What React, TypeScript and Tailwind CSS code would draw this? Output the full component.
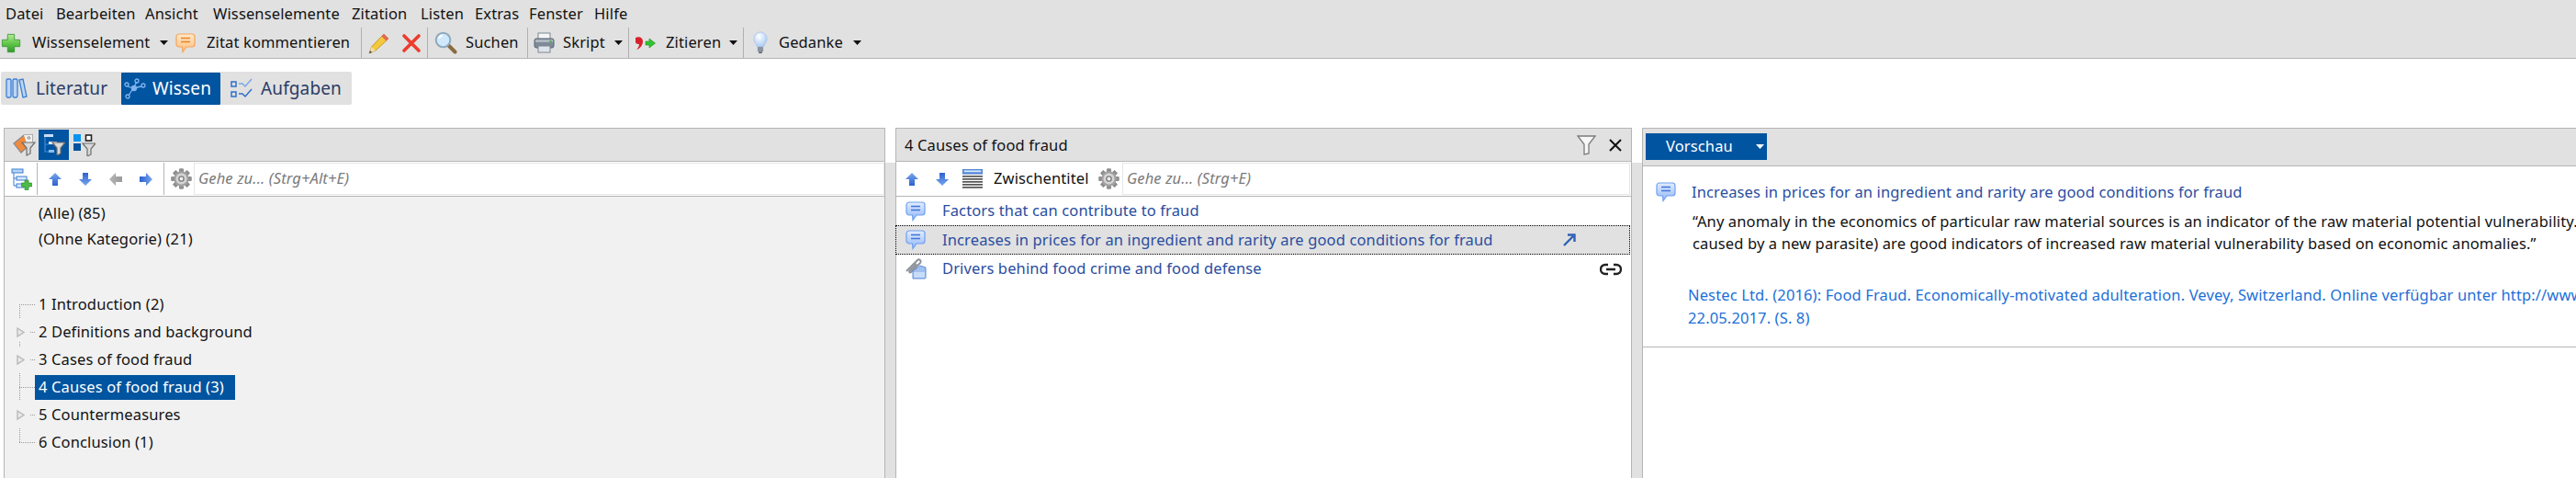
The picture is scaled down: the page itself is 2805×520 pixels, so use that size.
import React from "react";

const BLUE = "#01549f";

function Plus() {
  return (
    <svg width="22" height="22" viewBox="0 0 24 24" className="shrink-0">
      <defs>
        <linearGradient id="pg" x1="0" y1="0" x2="0" y2="1">
          <stop offset="0" stopColor="#b6ec9a" />
          <stop offset="0.5" stopColor="#62c94b" />
          <stop offset="1" stopColor="#2f9a2a" />
        </linearGradient>
      </defs>
      <path d="M8 1.500h8v6.500h6.500v8H16v6.500H8V16H1.500V8H8z" fill="url(#pg)" stroke="#3d9a38" strokeWidth="1" />
    </svg>
  );
}

function Bubble({ tone = "blue", size = 22 }: { tone?: "blue" | "orange"; size?: number }) {
  const c =
    tone === "blue"
      ? { a: "#e3edff", b: "#8fb6f6", s: "#6f9ff0", l: "#3f74d8" }
      : { a: "#ffe9c9", b: "#ffbd7a", s: "#f6a55b", l: "#e8842a" };
  const id = "bb" + tone;
  return (
    <svg width={size} height={size} viewBox="0 0 22 22" className="shrink-0">
      <defs>
        <linearGradient id={id} x1="0" y1="0" x2="0" y2="1">
          <stop offset="0" stopColor={c.a} />
          <stop offset="1" stopColor={c.b} />
        </linearGradient>
      </defs>
      <path
        d="M4 1h14a3 3 0 0 1 3 3v8a3 3 0 0 1-3 3h-6l-4 5.500-.5-5.500H4a3 3 0 0 1-3-3V4a3 3 0 0 1 3-3z"
        fill={`url(#${id})`}
        stroke={c.s}
        strokeWidth="1.200"
      />
      <path d="M6 5.500h10M6 9.500h10" stroke={c.l} strokeWidth="1.600" />
    </svg>
  );
}

function Pencil() {
  return (
    <svg width="24" height="24" viewBox="0 0 24 24" className="shrink-0">
      <path d="M17 2l5 5L8 20l-7 3 2.500-7z" fill="#f4c93b" stroke="#b98a1b" strokeWidth="0.800" />
      <path d="M17 2l5 5-2.500 2.500-5-5z" fill="#e2685a" />
      <path d="M1 23l2.500-7 4.500 4z" fill="#f2dcae" />
      <path d="M1 23l1-3 2 2z" fill="#444" />
    </svg>
  );
}

function RedX() {
  return (
    <svg width="22" height="22" viewBox="0 0 22 22" className="shrink-0">
      <path d="M3 3l16 16M19 3L3 19" stroke="#ec3b2f" strokeWidth="3.600" strokeLinecap="round" />
    </svg>
  );
}

function Magnifier() {
  return (
    <svg width="25" height="25" viewBox="0 0 25 25" className="shrink-0">
      <path d="M15 15l7.500 7.500" stroke="#8a6a3f" strokeWidth="4" strokeLinecap="round" />
      <circle cx="9.500" cy="9.500" r="7.800" fill="#cfe8fb" stroke="#8fa9bd" strokeWidth="2" />
      <path d="M5 8a5 5 0 0 1 4-3.500" stroke="#fff" strokeWidth="1.800" fill="none" />
    </svg>
  );
}

function Printer() {
  return (
    <svg width="23" height="23" viewBox="0 0 23 23" className="shrink-0">
      <rect x="5" y="1" width="13" height="8" fill="#f3f5f8" stroke="#7d8793" />
      <rect x="1" y="7" width="21" height="10" rx="2" fill="#7f8a97" stroke="#5b6672" />
      <rect x="2" y="8" width="19" height="3" fill="#aeb7c2" />
      <rect x="17" y="9" width="3" height="2" fill="#4ec04e" />
      <rect x="5" y="15" width="13" height="7" fill="#dfe4ea" stroke="#7d8793" />
    </svg>
  );
}

function QuoteArrow() {
  return (
    <svg width="22" height="14" viewBox="0 0 22 14" className="shrink-0">
      <path d="M0 1c4-2 8 0 8 4 0 4-3 8-7 9 2-2 3-4 3-6-2 0-4 0-4-3z" fill="#d8202c" />
      <path d="M11 5h4V2l6.500 5L15 12V9h-4z" fill="#31c331" stroke="#1e8f1e" strokeWidth="0.600" />
    </svg>
  );
}

function Bulb() {
  return (
    <svg width="16" height="25" viewBox="0 0 18 28" className="shrink-0">
      <defs>
        <radialGradient id="bulb" cx="0.4" cy="0.3" r="0.8">
          <stop offset="0" stopColor="#ffffff" />
          <stop offset="1" stopColor="#9fc4f3" />
        </radialGradient>
      </defs>
      <path d="M9 1a8 8 0 0 1 8 8c0 4-3 6-4 10H5C4 15 1 13 1 9a8 8 0 0 1 8-8z" fill="url(#bulb)" stroke="#a9c4e6" />
      <rect x="5.500" y="19" width="7" height="6" rx="1" fill="#8a939e" />
      <rect x="7" y="25" width="4" height="2" fill="#5d6670" />
    </svg>
  );
}

function Caret({ white = false }: { white?: boolean }) {
  return (
    <svg width="9" height="5" viewBox="0 0 9 5" className="shrink-0 block">
      <path d="M0 0h9L4.500 5z" fill={white ? "#fff" : "#111"} />
    </svg>
  );
}

function Sep() {
  return <div className="w-px h-[33px] bg-[#b0b0b0] shrink-0" />;
}

function Arrow({ dir, gray = false }: { dir: "up" | "down" | "left" | "right"; gray?: boolean }) {
  const rot = { up: 0, right: 90, down: 180, left: 270 }[dir];
  const id = gray ? "arG" : "arB";
  return (
    <svg width="14" height="14" viewBox="0 0 14 14" className="shrink-0" style={{ transform: `rotate(${rot}deg)` }}>
      <defs>
        <linearGradient id={id} x1="0" y1="0" x2="0" y2="1">
          <stop offset="0" stopColor={gray ? "#b5b5b5" : "#7aa6ef"} />
          <stop offset="1" stopColor={gray ? "#9a9a9a" : "#2c62cf"} />
        </linearGradient>
      </defs>
      <path d="M7 0l7 7H10v7H4V7H0z" fill={`url(#${id})`} />
    </svg>
  );
}

function Gear({ size = 23 }: { size?: number }) {
  const teeth = [0, 45, 90, 135, 180, 225, 270, 315];
  return (
    <svg width={size} height={size} viewBox="0 0 24 24" className="shrink-0">
      {teeth.map((t) => (
        <rect key={t} x="9.500" y="0.500" width="5" height="23" rx="1" fill="#8f8f8f" transform={`rotate(${t} 12 12)`} />
      ))}
      <circle cx="12" cy="12" r="8.500" fill="#a3a3a3" />
      <circle cx="12" cy="12" r="6.200" fill="#d6d6d6" />
      <circle cx="12" cy="12" r="3.500" fill="#7d7d7d" />
      <circle cx="12" cy="12" r="2" fill="#eeeeee" />
    </svg>
  );
}

function SmallFunnel({ x = 10, y = 10 }: { x?: number; y?: number }) {
  return (
    <g transform={`translate(${x} ${y})`}>
      <path d="M0 0h14L9 6v6l-4 2V6z" fill="#d9d9d9" stroke="#6e6e6e" strokeWidth="1.200" />
    </g>
  );
}

function TagFilter() {
  return (
    <svg width="25" height="25" viewBox="0 0 25 25" className="shrink-0">
      <path d="M1 11L12 2l9-.5L21 10 9 21z" fill="#f08a3c" stroke="#8a8a8a" strokeWidth="1.200" />
      <path d="M12 2l9-.5L21 10l-5 4z" fill="#f1f1f1" />
      <circle cx="17.500" cy="5" r="1.300" fill="#fff" stroke="#777" />
      <SmallFunnel x={10} y={10} />
    </svg>
  );
}

function TreeFilter() {
  return (
    <svg width="24" height="24" viewBox="0 0 24 24" className="shrink-0">
      <rect x="1" y="1" width="10" height="3" fill="#c8dcf7" />
      <path d="M2 4v16h4M2 12h4" stroke="#3f8be0" strokeWidth="1.200" fill="none" />
      <rect x="6" y="9" width="9" height="3" fill="#e4eefb" />
      <rect x="6" y="18" width="6" height="3" fill="#8cbcf2" />
      <SmallFunnel x={10} y={10} />
    </svg>
  );
}

function GridFilter() {
  return (
    <svg width="24" height="24" viewBox="0 0 24 24" className="shrink-0">
      <rect x="0" y="0" width="8" height="8" fill="#0a94f2" />
      <rect x="13.500" y="1" width="6" height="6" fill="#fff" stroke="#222" strokeWidth="1.600" />
      <rect x="0" y="10" width="8" height="8" fill="#01549f" />
      <SmallFunnel x={10} y={10} />
    </svg>
  );
}

function TreeAdd() {
  return (
    <svg width="24" height="24" viewBox="0 0 24 24" className="shrink-0">
      <rect x="1" y="1" width="12" height="4" fill="#b9d4f6" stroke="#3b7fd0" />
      <path d="M3 5v14h3M3 11h3" stroke="#3b7fd0" fill="none" />
      <rect x="6" y="9" width="11" height="4" fill="#d9e8fb" stroke="#3b7fd0" />
      <rect x="6" y="17" width="8" height="4" fill="#d9e8fb" stroke="#3b7fd0" />
      <path d="M15 13h4v3h3.500v4H19v3.500h-4V20h-3.500v-4H15z" fill="#4dbb47" stroke="#2a8e2a" strokeWidth="0.700" />
    </svg>
  );
}

function ListIcon() {
  return (
    <svg width="22" height="22" viewBox="0 0 22 22" className="shrink-0">
      <rect x="0" y="0" width="22" height="5" fill="#6d9fe4" stroke="#3e6fc0" />
      <rect x="2" y="1.500" width="18" height="1.500" fill="#dbe8fb" />
      {[7, 10, 13, 16, 19].map((y) => (
        <rect key={y} x="0" y={y} width="22" height="1.700" fill="#555" />
      ))}
    </svg>
  );
}

function Clip() {
  return (
    <svg width="23" height="23" viewBox="0 0 23 23" className="shrink-0">
      <path d="M1 14L13 2c2-2 5 1 3 3L6 15c-1 1-2.500 0-1.500-1.500L12 6" fill="none" stroke="#8a8f98" strokeWidth="1.800" />
      <path d="M8 14l8-6 6 2v11a1 1 0 0 1-1 1H8z" fill="#9fc0f0" stroke="#5f8fd8" />
      <path d="M9 15h12v6H9z" fill="#c7dcf8" />
    </svg>
  );
}

function TabLit() {
  return (
    <svg width="24" height="24" viewBox="0 0 24 24" className="shrink-0">
      <g fill="#bcd6f5" stroke="#3f7fd0" strokeWidth="1.300">
        <rect x="1" y="2" width="5" height="20" rx="1.500" />
        <rect x="8" y="2" width="5" height="20" rx="1.500" />
        <path d="M15 3l4-1 4 19-4 1z" />
      </g>
    </svg>
  );
}

function TabWissen() {
  return (
    <svg width="24" height="24" viewBox="0 0 24 24" className="shrink-0" fill="none" stroke="#7fb4ef" strokeWidth="1.300">
      <path d="M4 10l6 2 4-7M10 12l-5 8M10 12l9-2" />
      <circle cx="3" cy="8" r="2" />
      <circle cx="14" cy="4" r="2" />
      <circle cx="21" cy="9" r="2" />
      <circle cx="4" cy="21" r="2" />
      <circle cx="11" cy="12" r="2.500" fill="#7fb4ef" />
    </svg>
  );
}

function TabAufgaben() {
  return (
    <svg width="24" height="24" viewBox="0 0 24 24" className="shrink-0" fill="none">
      <rect x="1" y="5" width="5" height="5" stroke="#2f6fc9" strokeWidth="1.500" />
      <rect x="1" y="16" width="5" height="5" stroke="#2f6fc9" strokeWidth="1.500" />
      <path d="M9 7h4l3 3 7-8" stroke="#78a9e6" strokeWidth="1.500" />
      <path d="M9 18h4l3 3 7-8" stroke="#2f6fc9" strokeWidth="1.500" />
    </svg>
  );
}

function BigFunnel() {
  return (
    <svg width="21" height="22" viewBox="0 0 21 22" className="shrink-0">
      <path d="M1 1h19l-7 9v10l-5 1V10z" fill="#f7f7f7" stroke="#7b7b7b" strokeWidth="1.300" />
    </svg>
  );
}

function TreeGlyph({ v, tri = false }: { v: [number, number][]; tri?: boolean }) {
  return (
    <svg width="38" height="30" viewBox="0 0 38 30" className="shrink-0">
      {v.map(([a, b], i) => (
        <path key={i} d={`M21.500 ${a}V${b}`} stroke="#9a9a9a" strokeDasharray="1 1" fill="none" />
      ))}
      {tri ? (
        <g>
          <path d="M19 11l7 4.500-7 4.500z" fill="#e9e9e9" stroke="#b5b5b5" strokeWidth="1.300" />
          <path d="M33 15.500h5" stroke="#9a9a9a" strokeDasharray="1 1" />
        </g>
      ) : (
        <path d="M21 15.500h17" stroke="#9a9a9a" strokeDasharray="1 1" />
      )}
    </svg>
  );
}

function TreeRow({ label, v, tri, selected }: { label: string; v: [number, number][]; tri?: boolean; selected?: boolean }) {
  return (
    <div className="flex items-center h-[30px]">
      <TreeGlyph v={v} tri={tri} />
      {selected ? (
        <div className="h-[27px] w-[218px] pl-[4px] flex items-center text-white bg-[#01549f] whitespace-nowrap">{label}</div>
      ) : (
        <div className="pl-[4px] whitespace-nowrap text-[#111]">{label}</div>
      )}
    </div>
  );
}

function SearchInput({ text, left }: { text: string; left: string }) {
  return (
    <div className={`flex-1 h-[35px] border border-[#e6e6e6] flex items-center italic text-[#7a7a7a] ${left}`}>{text}</div>
  );
}

export default function App() {
  return (
    <div
      className="w-[2805px] h-[520px] overflow-hidden bg-white flex flex-col text-[16.5px] tracking-[0.13px] leading-none text-[#111]"
      style={{ fontFamily: '"Noto Sans", "Open Sans", sans-serif' }}
    >
      {/* menu */}
      <div className="h-[30px] bg-[#e1e1e1] flex items-center shrink-0 pl-[6px]">
        <span className="w-[55px]">Datei</span>
        <span className="w-[97px]">Bearbeiten</span>
        <span className="w-[74px]">Ansicht</span>
        <span className="w-[151px]">Wissenselemente</span>
        <span className="w-[75px]">Zitation</span>
        <span className="w-[59px]">Listen</span>
        <span className="w-[59px]">Extras</span>
        <span className="w-[71px]">Fenster</span>
        <span>Hilfe</span>
      </div>
      {/* toolbar */}
      <div className="h-[34px] bg-[#e1e1e1] border-b border-[#b5b5b5] flex items-center shrink-0 pl-[1px]">
        <Plus />
        <span className="ml-[12px] w-[127px] whitespace-nowrap">Wissenselement</span>
        <span className="ml-[12px]"><Caret /></span>
        <span className="ml-[8px]"><Bubble tone="orange" /></span>
        <span className="ml-[12px] w-[156px] whitespace-nowrap">Zitat kommentieren</span>
        <span className="ml-[12px]"><Sep /></span>
        <span className="ml-[7px]"><Pencil /></span>
        <span className="ml-[12px]"><RedX /></span>
        <span className="ml-[6px]"><Sep /></span>
        <span className="ml-[7px]"><Magnifier /></span>
        <span className="ml-[9px] w-[56px]">Suchen</span>
        <span className="ml-[11px]"><Sep /></span>
        <span className="ml-[6px]"><Printer /></span>
        <span className="ml-[9px] w-[46px]">Skript</span>
        <span className="ml-[10px]"><Caret /></span>
        <span className="ml-[6px]"><Sep /></span>
        <span className="ml-[7px]"><QuoteArrow /></span>
        <span className="ml-[11px] w-[58px]">Zitieren</span>
        <span className="ml-[11px]"><Caret /></span>
        <span className="ml-[6px]"><Sep /></span>
        <span className="ml-[10px]"><Bulb /></span>
        <span className="ml-[12px] w-[70px]">Gedanke</span>
        <span className="ml-[11px]"><Caret /></span>
      </div>
      {/* tabs */}
      <div className="h-[75px] shrink-0 pt-[14px] pl-[1px]">
        <div className="w-[382px] h-[36px] bg-[#e1e1e1] rounded-[2px] flex items-center text-[19px] text-[#2b3c66]">
          <div className="flex items-center w-[131px] pl-[5px]">
            <TabLit />
            <span className="ml-[9px]">Literatur</span>
          </div>
          <div className="flex items-center w-[108px] h-[35px] pl-[3px] text-white rounded-[1px]" style={{ background: BLUE }}>
            <TabWissen />
            <span className="ml-[7px]">Wissen</span>
          </div>
          <div className="flex items-center pl-[11px]">
            <TabAufgaben />
            <span className="ml-[9px]">Aufgaben</span>
          </div>
        </div>
      </div>
      {/* panels */}
      <div className="flex-1 flex pl-[4px] min-h-0">
        {/* left */}
        <div className="w-[960px] shrink-0 border-l border-r border-t border-[#b5b5b5] flex flex-col">
          <div className="h-[36px] bg-[#e1e1e1] border-b border-[#b5b5b5] flex items-center shrink-0 pl-[9px]">
            <TagFilter />
            <div className="ml-[3px] w-[33px] h-[33px] flex items-center justify-center bg-[#01549f] mt-[-1px]">
              <TreeFilter />
            </div>
            <div className="ml-[5px]"><GridFilter /></div>
          </div>
          <div className="h-[38px] bg-white border-b border-[#b5b5b5] flex items-center shrink-0">
            <div className="w-[35px] pl-[7px]"><TreeAdd /></div>
            <div className="w-px h-[35px] bg-[#b5b5b5]" />
            <div className="w-[137px] flex items-center pl-[12px] gap-[19px]">
              <Arrow dir="up" />
              <Arrow dir="down" />
              <Arrow dir="left" gray />
              <Arrow dir="right" />
            </div>
            <div className="w-px h-[35px] bg-[#b5b5b5]" />
            <div className="ml-[7px] mr-[2px]"><Gear /></div>
            <SearchInput text="Gehe zu... (Strg+Alt+E)" left="pl-[4px]" />
          </div>
          <div className="flex-1 bg-[#f1f1f1] pt-[5px]">
            <div className="h-[27px] pl-[37px] flex items-center">(Alle) (85)</div>
            <div className="h-[28px] pl-[37px] flex items-center">(Ohne Kategorie) (21)</div>
            <div className="mt-[42px] -ml-[5px]">
              <TreeRow label="1 Introduction (2)" v={[[15, 30]]} />
              <TreeRow label="2 Definitions and background" v={[[26, 30]]} tri />
              <TreeRow label="3 Cases of food fraud" v={[[0, 2]]} tri />
              <TreeRow label="4 Causes of food fraud (3)" v={[[0, 30]]} selected />
              <TreeRow label="5 Countermeasures" v={[]} tri />
              <TreeRow label="6 Conclusion (1)" v={[[0, 15]]} />
            </div>
          </div>
        </div>
        <div className="w-[11px] shrink-0 mt-[38px] bg-[#e1e1e1]" />
        {/* middle */}
        <div className="w-[802px] shrink-0 border-l border-r border-t border-[#b5b5b5] flex flex-col">
          <div className="h-[36px] bg-[#e1e1e1] border-b border-[#b5b5b5] flex items-center shrink-0 pl-[9px] pr-[10px]">
            <span className="flex-1 pt-[2px]">4 Causes of food fraud</span>
            <BigFunnel />
            <svg width="14" height="14" viewBox="0 0 14 14" className="ml-[14px] shrink-0">
              <path d="M1 1l12 12M13 1L1 13" stroke="#111" strokeWidth="2" />
            </svg>
          </div>
          <div className="h-[38px] bg-white border-b border-[#b5b5b5] flex items-center shrink-0 pl-[10px]">
            <Arrow dir="up" />
            <span className="ml-[19px]"><Arrow dir="down" /></span>
            <span className="ml-[15px]"><ListIcon /></span>
            <span className="ml-[12px] w-[101px] text-[#111] whitespace-nowrap">Zwischentitel</span>
            <span className="ml-[13px] mr-[3px]"><Gear /></span>
            <SearchInput text="Gehe zu... (Strg+E)" left="pl-[4px] mr-[1px]" />
          </div>
          <div className="flex-1 flex flex-col text-[#2a4da0]">
            <div className="h-[31px] flex items-center pl-[10px]">
              <Bubble />
              <span className="ml-[18px]">Factors that can contribute to fraud</span>
            </div>
            <div className="h-[32px] flex items-center pl-[10px] bg-[#e1e1e1] border border-dotted border-black -ml-px mr-[1px]">
              <Bubble />
              <span className="ml-[18px] flex-1">Increases in prices for an ingredient and rarity are good conditions for fraud</span>
              <svg width="14" height="14" viewBox="0 0 14 14" className="mr-[58px] shrink-0">
                <path d="M1 13L11 3M5 1.500h7.500V9" stroke="#2f62b8" strokeWidth="2.400" fill="none" />
              </svg>
            </div>
            <div className="h-[31px] flex items-center pl-[10px]">
              <Clip />
              <span className="ml-[17px] flex-1">Drivers behind food crime and food defense</span>
              <svg width="24" height="14" viewBox="0 0 24 14" className="mr-[10px] shrink-0">
                <path d="M9 2H6a5 5 0 0 0 0 10h3M15 2h3a5 5 0 0 1 0 10h-3M7 7h10" stroke="#222" strokeWidth="2.400" fill="none" />
              </svg>
            </div>
          </div>
        </div>
        <div className="w-[11px] shrink-0 mt-[38px] bg-[#e1e1e1]" />
        {/* right */}
        <div className="flex-1 min-w-0 border-l border-t border-[#b5b5b5] flex flex-col overflow-hidden">
          <div className="h-[41px] bg-[#e1e1e1] border-b border-[#b5b5b5] flex items-center shrink-0 pl-[3px]">
            <div className="w-[132px] h-[29px] bg-[#01549f] text-white flex items-center pl-[22px] mt-[-1px]">
              <span className="w-[98px]">Vorschau</span>
              <Caret white />
            </div>
          </div>
          <div className="h-[197px] border-b border-[#b5b5b5] shrink-0 pl-[14px] pt-[17px] whitespace-nowrap">
            <div className="flex items-center h-[22px]">
              <Bubble />
              <span className="ml-[17px] text-[#2a4da0]">Increases in prices for an ingredient and rarity are good conditions for fraud</span>
            </div>
            <div className="pl-[40px] mt-[9px] leading-[24px] text-[#111]">
              <div>“Any anomaly in the economics of particular raw material sources is an indicator of the raw material potential vulnerability.</div>
              <div>caused by a new parasite) are good indicators of increased raw material vulnerability based on economic anomalies.”</div>
            </div>
            <div className="pl-[35px] mt-[31px] leading-[25px] text-[#1d6fd8]">
              <div>Nestec Ltd. (2016): Food Fraud. Economically-motivated adulteration. Vevey, Switzerland. Online verfügbar unter http://www</div>
              <div>22.05.2017. (S. 8)</div>
            </div>
          </div>
          <div className="flex-1 bg-white" />
        </div>
      </div>
    </div>
  );
}
